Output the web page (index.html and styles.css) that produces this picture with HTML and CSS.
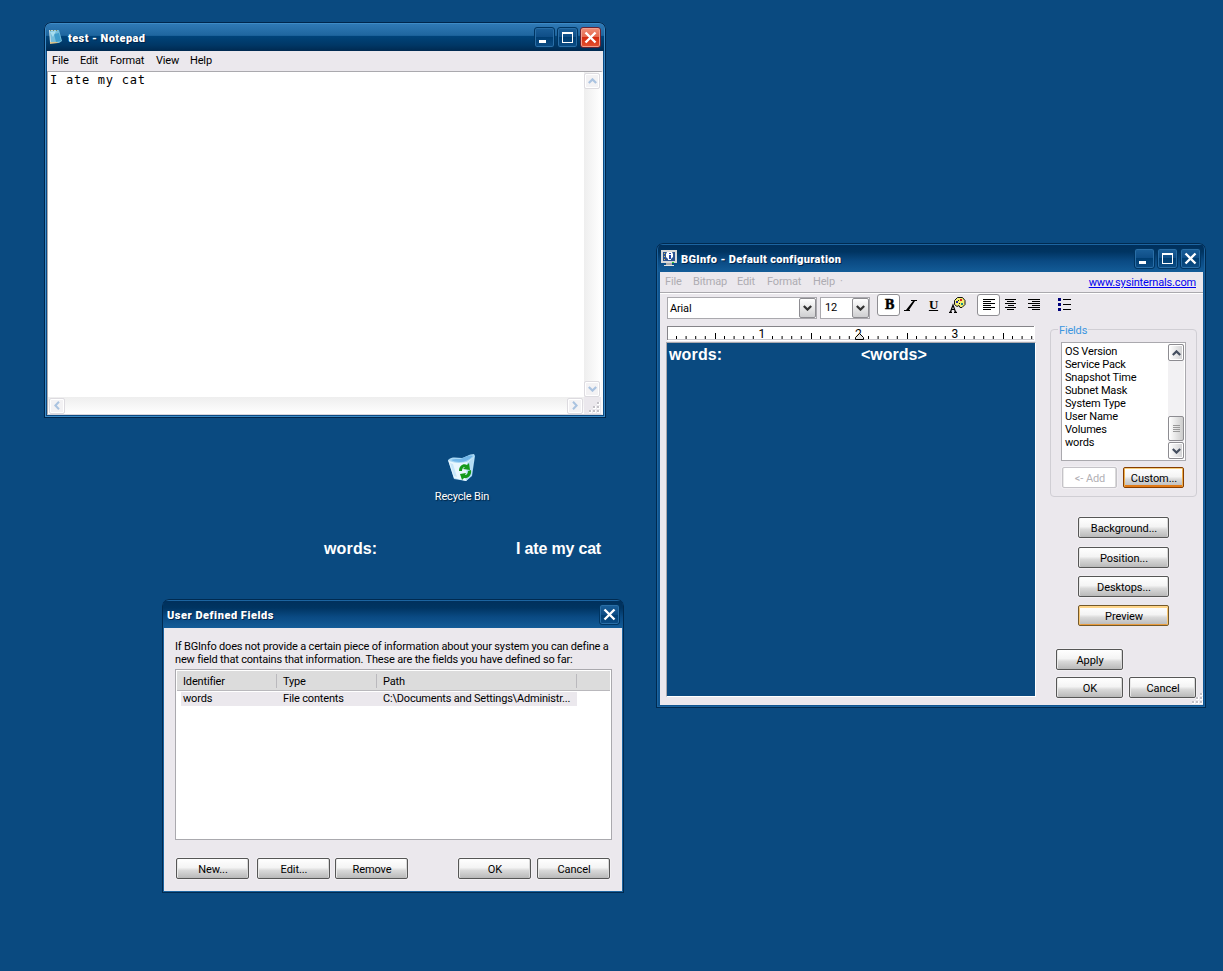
FILE: index.html
```html
<!DOCTYPE html>
<html lang="en">
<head>
<meta charset="utf-8">
<title>Desktop</title>
<link rel="stylesheet" href="styles.css">
</head>
<body>
<svg class="defs" width="0" height="0">
  <symbol id="min" viewBox="0 0 21 21"><path fill="#fff" d="M5 13h7v3H5z"/></symbol>
  <symbol id="max" viewBox="0 0 21 21"><path fill="#fff" fill-rule="evenodd" d="M5 5h11v11H5zM6 7v8h9V7z"/></symbol>
  <symbol id="close" viewBox="0 0 21 21"><path stroke="#fff" stroke-width="2.4" d="M5.5 5.5l10 10M15.5 5.5l-10 10"/></symbol>
  <symbol id="up" viewBox="0 0 9 6"><path fill="none" stroke="currentColor" stroke-width="2.2" d="M.8 5l3.7-3.6L8.2 5"/></symbol>
  <symbol id="down" viewBox="0 0 9 6"><path fill="none" stroke="currentColor" stroke-width="2.2" d="M.8 1l3.7 3.6L8.2 1"/></symbol>
  <symbol id="left" viewBox="0 0 6 9"><path fill="none" stroke="currentColor" stroke-width="2" d="M5 .8L1.4 4.5 5 8.2"/></symbol>
  <symbol id="right" viewBox="0 0 6 9"><path fill="none" stroke="currentColor" stroke-width="2" d="M1 .8l3.6 3.7L1 8.2"/></symbol>
  <symbol id="grip" viewBox="0 0 12 12"><path fill="#fff" d="M9 1h3v3H9zM5 5h3v3H5zM9 5h3v3H9zM1 9h3v3H1zM5 9h3v3H5zM9 9h3v3H9z"/><path fill="#c3c1c7" d="M9 1h2v2H9zM5 5h2v2H5zM9 5h2v2H9zM1 9h2v2H1zM5 9h2v2H5zM9 9h2v2H9z"/></symbol>
</svg>

<main class="desktop">
  <section class="win notepad active">
    <header class="titlebar">
      <svg class="app-icon" width="14" height="16" viewBox="0 0 14 16"><path fill="#c9dde4" d="M0 1h9l1 13H1z"/><path fill="#75bddb" d="M1 2l9-1 3 11-3 2-8-1z"/><path fill="#3f9ccb" d="M5 5l5-1 2 8-5 1z"/><path fill="#a7deef" d="M1 3l6-1-3 6z"/><path fill="#7b8e65" d="M1 1h1v1H1zM4 1h1v1H4zM7 1h1v1H7z"/><path fill="#d8c18a" d="M1 13h7l1 1-8 1z"/></svg>
      <h1 class="title t-note">test - Notepad</h1>
      <div class="controls">
        <span class="ctl"><svg><use href="#min"/></svg></span>
        <span class="ctl"><svg><use href="#max"/></svg></span>
        <span class="ctl red"><svg><use href="#close"/></svg></span>
      </div>
    </header>
    <div class="client note-client">
      <nav class="menu"><span>File</span><span>Edit</span><span>Format</span><span>View</span><span>Help</span></nav>
      <div class="note-body">
        <div class="note-text">I ate my cat</div>
        <div class="track vert"><span class="sbtn off"><svg width="9" height="6"><use href="#up"/></svg></span><span class="sbtn off"><svg width="9" height="6"><use href="#down"/></svg></span></div>
        <div class="track horz"><span class="sbtn off"><svg width="6" height="9"><use href="#left"/></svg></span><span class="sbtn off"><svg width="6" height="9"><use href="#right"/></svg></span></div>
        <div class="corner"><svg width="12" height="12"><use href="#grip"/></svg></div>
      </div>
    </div>
  </section>

  <figure class="bin">
    <svg width="32" height="32" viewBox="0 0 32 32">
      <path fill="#a9d8f5" d="M2 8c4-4 9-2 14-2 4-1 7-4 12-4l1 2-3 20-6 5-12-2z"/>
      <path fill="#e9f7fe" d="M2 8c6 4 14 3 19 2l7-5-3 18-5 6-12-3z"/>
      <path fill="#72b6e8" d="M5 8c4-2 8 0 12-2 4-2 6-3 10-2-4 4-8 6-13 6-4 0-7-1-9-2z"/>
      <path fill="#b4dcf5" d="M21 11l7-6-3 19-5 5z"/>
      <path fill="#c8e7fa" d="M4 11l3 1 4 13-3-1z"/>
      <path fill="#159a1b" d="M13 19c0-6 5-8 8-6l2-2 1 7-7-1 2-2c-2 0-3 2-3 4zM25 18c1 5-3 9-7 8l-2 2-2-6 6-1-1 2c2 0 3-2 3-4z"/>
    </svg>
    <figcaption>Recycle Bin</figcaption>
  </figure>

  <div class="wall"><span>words:</span><span>I ate my cat</span></div>

  <section class="win bginfo">
    <header class="titlebar">
      <svg class="app-icon" width="16" height="17" viewBox="0 0 16 17"><path fill="#d8d8d8" d="M0 0h16v13H0z"/><path fill="#2b5290" d="M2 2h12v9H2z"/><path fill="#fff" d="M6 2h5l1 2v3l-2 2v1H7V9L5 7V4z"/><path fill="#2345a8" d="M8 3h2v1H8zM8 5h2v4H8z"/><path fill="#d8c050" d="M3 3h1v1H3zM3 6h1v1H3zM3 9h1v1H3z"/><path fill="#35d62c" d="M11 12h2v1h-2z"/><path fill="#aaa" d="M5 13h6v2H5z"/><path fill="#e4e4e4" d="M3 15h10v1H3z"/></svg>
      <h1 class="title t-bg">BGInfo - Default configuration</h1>
      <div class="controls">
        <span class="ctl"><svg><use href="#min"/></svg></span>
        <span class="ctl"><svg><use href="#max"/></svg></span>
        <span class="ctl"><svg><use href="#close"/></svg></span>
      </div>
    </header>
    <div class="client bg-client">
      <nav class="menu dim"><span>File</span><span>Bitmap</span><span>Edit</span><span>Format</span><span>Help&nbsp; ·</span><a class="site">www.sysinternals.com</a></nav>
      <div class="bg-main">
        <div class="editor-col">
          <div class="toolbar">
            <div class="combo font"><span>Arial</span><span class="drop"><svg width="9" height="6"><use href="#down"/></svg></span></div>
            <div class="combo size"><span>12</span><span class="drop"><svg width="9" height="6"><use href="#down"/></svg></span></div>
            <div class="tools">
              <span class="tool on bold">B</span>
              <span class="tool ital"><svg width="13" height="11" viewBox="0 0 13 11"><path d="M7 0h6v1h-2l-6 9h1v1H0v-1h2l7-9H7z"/></svg></span>
              <span class="tool under">U</span>
              <span class="tool"><svg width="17" height="16" viewBox="0 0 17 16"><path fill="#f2ee72" stroke="#111" d="M5.500 3.500l3-3h5l2.500 3v4l-3 3h-2l-1-2-2 1-2.500-2z"/><path fill="#d22" d="M11 2h2v2h-2z"/><path fill="#22a" d="M7 4h2v2H7z"/><path fill="#1a8a8a" d="M12 6h2v2h-2z"/><path fill="#111" d="M9 3h1v1H9zM10 6h1v1h-1z"/><path fill="none" stroke="#000" stroke-width="1.200" d="M1.500 15l2.500-7 2.500 7M2.500 12.500h3M0 15.400h3M5 15.400h3"/></svg></span>
              <span class="tool on al"><svg width="12" height="12" viewBox="0 0 12 12"><path d="M0 0h12v1H0zM0 2h8v1H0zM0 4h12v1H0zM0 6h8v1H0zM0 8h12v1H0zM0 10h8v1H0z"/></svg></span>
              <span class="tool lift"><svg width="12" height="12" viewBox="0 0 12 12"><path d="M0 0h11v1H0zM2 2h7v1H2zM0 4h11v1H0zM3 6h6v1H3zM0 8h11v1H0zM2 10h7v1H2z"/></svg></span>
              <span class="tool lift"><svg width="12" height="12" viewBox="0 0 12 12"><path d="M0 0h12v1H0zM4 2h8v1H4zM0 4h12v1H0zM4 6h8v1H4zM0 8h12v1H0zM4 10h8v1H4z"/></svg></span>
            </div>
          </div>
          <svg class="ruler" width="368" height="15" viewBox="0 0 368 15">
            <path fill="#fff" d="M0 0h368v15H0z"/><path fill="#858489" d="M0 0h367v1H1v13H0z"/><path fill="#c9c7cc" d="M1 13h366v1H1z"/>
            <path stroke="#000" stroke-width="3" stroke-dasharray="1 8.600" d="M9 11.500h38M57 11.500h33M105 11.500h38M153 11.500h33M201 11.500h38M249 11.500h33M297 11.500h38M345 11.500h23"/>
            <path d="M48 7h1v6h-1zM144 7h1v6h-1zM240 7h1v6h-1zM336 7h1v6h-1z"/>
            <text x="91.500" y="12">1</text><text x="188" y="12">2</text><text x="284.500" y="12">3</text>
            <path fill="#e4e4e4" stroke="#000" d="M188.500 13.500v-2l4-4 4 4v2z"/>
          </svg>
          <div class="rich"><span>words:</span><span>&lt;words&gt;</span></div>
        </div>
        <aside class="side">
          <svg class="bullets" width="13" height="13" viewBox="0 0 13 13"><path fill="#00007b" d="M0 0h3v3H0zM0 5h3v3H0zM0 10h3v3H0z"/><path d="M5 1h8v1H5zM5 6h8v1H5zM5 11h8v1H5z"/></svg>
          <fieldset class="group">
            <legend>Fields</legend>
            <div class="listbox">
              <ul><li>OS Version</li><li>Service Pack</li><li>Snapshot Time</li><li>Subnet Mask</li><li>System Type</li><li>User Name</li><li>Volumes</li><li>words</li></ul>
              <div class="track lv"><span class="sbtn"><svg width="9" height="6"><use href="#up"/></svg></span><span class="thumb"></span><span class="sbtn"><svg width="9" height="6"><use href="#down"/></svg></span></div>
            </div>
            <div class="pair"><button class="btn w55" disabled>&lt;- Add</button><button class="btn w61 hot">Custom...</button></div>
          </fieldset>
          <div class="stack"><button class="btn">Background...</button><button class="btn gap9">Position...</button><button class="btn">Desktops...</button><button class="btn warm">Preview</button></div>
          <div class="final"><button class="btn">Apply</button><i></i><button class="btn">OK</button><button class="btn">Cancel</button></div>
          <svg class="win-grip" width="12" height="12"><use href="#grip"/></svg>
        </aside>
      </div>
    </div>
  </section>

  <section class="win fields">
    <header class="titlebar">
      <h1 class="title t-udf">User Defined Fields</h1>
      <div class="controls"><span class="ctl"><svg><use href="#close"/></svg></span></div>
    </header>
    <div class="client udf-client">
      <p class="info">If BGInfo does not provide a certain piece of information about your system you can define a<br>new field that contains that information. These are the fields you have defined so far:</p>
      <div class="table">
        <div class="thead"><span>Identifier</span><span>Type</span><span>Path</span></div>
        <div class="trow"><span>words</span><span>File contents</span><span>C:\Documents and Settings\Administr...</span></div>
      </div>
      <footer class="actions"><button class="btn">New...</button><button class="btn">Edit...</button><button class="btn">Remove</button><button class="btn">OK</button><button class="btn">Cancel</button></footer>
    </div>
  </section>
</main>
</body>
</html>
```
FILE: styles.css
```css
* { box-sizing: border-box; }
body { margin: 0; background: #0a4a80; font: 11px/13px Roboto, sans-serif; letter-spacing: -.16px; color: #000; }
svg { display: block; flex: none; }
.defs { position: absolute; }
.desktop { position: relative; width: 1223px; height: 971px; overflow: hidden; }

/* Window frame */
.win { position: absolute; display: flex; flex-direction: column; padding: 0 3px 3px;
  border-radius: 7px 7px 0 0; background: #105590;
  box-shadow: inset 0 0 0 1px #002a50, inset 0 0 0 2px #1c64a0; }
.win.active { box-shadow: inset 0 0 0 1px #00264c, inset 0 0 0 2px #3d8bc6; background: #0b4a83; }
.titlebar { display: flex; flex: none; height: 29px; margin: 0 -1px; padding: 2px 3px 0;
  border-radius: 6px 6px 0 0; background: linear-gradient(#0000 2px, #00305c 2px, #003461 30%, #0a4a83 62%, #135c98); }
.active .titlebar { background: linear-gradient(#0000 2px, #2f79b5 2px, #1e669f 46%, #004379 50%, #003765 80%, #002950); }
.title { margin: 7px 0 0 4px; font-size: 11px; line-height: 15px; font-weight: 900; color: #fff; white-space: nowrap; text-shadow: 1px 1px #00234a; }
.t-note { margin-left: 5px; letter-spacing: .42px; }
.t-bg { letter-spacing: .34px; }
.t-udf { letter-spacing: .52px; }
.app-icon { margin-top: 5px; }
.controls { display: flex; gap: 2px; margin: 3px 0 0 auto; }
.ctl { width: 21px; height: 21px; border: 1px solid #003562; border-radius: 3px; box-shadow: inset 0 0 0 1px #2a6ea6; background: linear-gradient(#1b5f99, #0d4c85 50%, #003e72 50%, #0c4d86); }
.ctl svg { width: 21px; height: 21px; margin: -1px; }
.ctl.red { border-color: #6a2230; box-shadow: inset 0 0 0 1px #f1a08e; background: linear-gradient(#ef8f78, #e5654a 50%, #d52c10 50%, #e65331); }
.client { flex: 1; display: flex; flex-direction: column; min-height: 0; background: #ebe8ed; }
.menu { display: flex; flex: none; }

/* Scroll parts */
.track { display: flex; justify-content: space-between; }
.sbtn { display: flex; align-items: center; justify-content: center; width: 16px; height: 17px; flex: none; border: 1px solid #8d8c91; border-radius: 2px; box-shadow: inset 0 0 0 1px #fff; background: linear-gradient(90deg, #fff, #d0d0d2); color: #454f60; }
.sbtn.off { width: 16px; height: 16px; border-color: #dddbe0; background: #f3f2f4; color: #aac3e0; }

/* Notepad */
.notepad { left: 44px; top: 22px; width: 562px; height: 396px; }
.notepad .menu { height: 20px; padding: 3px 0 0 5px; }
.menu span { white-space: nowrap; }
.notepad .menu span:nth-child(1) { width: 28px; }
.notepad .menu span:nth-child(2) { width: 30px; }
.notepad .menu span:nth-child(3) { width: 46px; }
.notepad .menu span:nth-child(4) { width: 34px; }
.note-body { flex: 1; display: grid; grid-template: 1fr 17px / 1fr 17px; border: 1px solid #aaa9ae; border-right: 2px solid #fafafa; border-bottom: 1px solid #d8d5db; background: #fff; }
.note-text { padding: 1px 2px; font: 12px/14px "DejaVu Sans Mono", monospace; letter-spacing: .75px; }
.vert { flex-direction: column; padding: 1px 0 0; background: linear-gradient(90deg, #eee, #fff); }
.horz { padding: 0 1px; align-items: center; background: linear-gradient(#eee, #fff); }
.corner { padding: 4px 0 0 4px; background: #ebe8ed; }

/* Desktop items */
.bin { position: absolute; left: 422px; top: 452px; width: 80px; margin: 0; display: flex; flex-direction: column; align-items: center; gap: 6px; color: #fff; white-space: nowrap; text-shadow: 1px 1px 1px #00203c; }
.wall { position: absolute; left: 324px; top: 539px; display: flex; font: bold 16px/19px "Liberation Sans", sans-serif; letter-spacing: -.18px; color: #fff; }
.wall span:first-child { width: 192px; letter-spacing: .15px; }

/* BGInfo */
.bginfo { left: 656px; top: 243px; width: 550px; height: 465px; }
.bginfo .client { margin-left: 1px; }
.dim { height: 21px; padding: 3px 7px 0 5px; border-bottom: 1px solid #aaa9ae; box-shadow: 0 1px #fff; color: #aeacb2; }
.dim span:nth-child(1) { width: 28px; }
.dim span:nth-child(2) { width: 44px; }
.dim span:nth-child(3) { width: 30px; }
.dim span:nth-child(4) { width: 46px; }
.site { margin: 1px 0 0 auto; color: #0000f0; text-decoration: underline; }
.bg-main { display: flex; flex: 1; }
.editor-col { display: flex; flex-direction: column; width: 390px; padding-left: 6px; }
.toolbar { display: flex; height: 33px; padding: 1px 0 0 1px; }
.combo { display: flex; height: 22px; margin-top: 3px; border: 1px solid #aaa9ae; background: #fff; }
.combo > span:first-child { flex: 1; padding: 4px 2px; }
.combo.font { width: 150px; }
.combo.size { width: 50px; margin-left: 3px; }
.combo.size > span:first-child { padding: 3px 4px; }
.drop { display: flex; align-items: center; justify-content: center; width: 17px; border: 1px solid #8d8c91; border-radius: 2px; background: linear-gradient(#fff, #cfcfd1); color: #333; }
.tools { display: flex; margin-left: 7px; }
.tool { display: flex; align-items: center; justify-content: center; width: 23px; height: 22px; font: bold 13px/20px "Liberation Serif", serif; }
.tool.on { border: 1px solid #8f8e93; border-radius: 3px; background: #fff; }
.tool.bold { font-weight: 900; font-size: 14px; padding-left: 2px; -webkit-text-stroke: .5px #000; }
.tool.ital { padding-right: 3px; }
.tool.under { padding-right: 2px; text-decoration: underline; }
.tool.al { margin-left: 8px; }
.tool.lift { padding-right: 2px; }
.ruler { margin-left: 1px; font: 12px Roboto, sans-serif; }
.rich { display: flex; width: 370px; height: 355px; margin-top: 1px; padding: 2px 2px; border: 1px solid #aaa9ae; border-right-color: #fff; border-bottom-color: #fff; background: #0a4a80; color: #fff; font: bold 16px/19px "Liberation Sans", sans-serif; letter-spacing: 0; }
.rich span:first-child { width: 192px; letter-spacing: .15px; }
.side { position: relative; width: 153px; padding-top: 5px; }
.bullets { margin-left: 8px; }
.group { width: 147px; height: 174px; margin: 12px 0 0; padding: 6px 10px 0; border: 1px solid #d0ced4; border-radius: 4px; min-width: 0; }
.group legend { height: 13px; margin-left: -3px; padding: 0 1px; line-height: 15px; color: #3b96e0; }
.listbox { display: flex; justify-content: space-between; width: 125px; height: 119px; padding: 1px; border: 1px solid #aaa9ae; background: #fff; }
.listbox ul { margin: 1px 0 0; padding: 0 0 0 2px; list-style: none; }
.lv { flex-direction: column; width: 16px; background: #f2f1f3; }
.lv .thumb { height: 25px; margin: auto 0 1px; border: 1px solid #8d8c91; border-radius: 2px; background: linear-gradient(#999 0 0) center 8px/7px 1px no-repeat, linear-gradient(#999 0 0) center 10px/7px 1px no-repeat, linear-gradient(#999 0 0) center 12px/7px 1px no-repeat, linear-gradient(#999 0 0) center 14px/7px 1px no-repeat, linear-gradient(90deg, #fff, #ccc); }
.pair { display: flex; gap: 6px; padding: 6px 0 0 1px; }

/* Push buttons */
.btn { display: block; flex: none; height: 21px; padding: 1px 0 0; border: 1px solid #565656; border-radius: 2px; background: linear-gradient(#fff, #f4f4f4 45%, #d9d9d9 60%, #b9b9b9); box-shadow: inset 1px 0 #e9e9e9, inset -1px 0 #d9d9d9, 0 0 0 1px #f1eff2; font: 11px/19px Roboto, sans-serif; letter-spacing: -.07px; color: #000; }
.btn { padding: 2px 0 0 1px; line-height: 17px; }
.btn:disabled { border-color: #c5c3c8; background: #fff; color: #b2b0b5; }
.w55 { width: 55px; }
.w61 { width: 61px; }
.hot { border-color: #863d00; box-shadow: inset 0 1px #f6ce7d, inset 1px 0 #edae4d, inset -1px 0 #edae4d, inset 0 -2px #e27a16; }
.warm { border-color: #74592b; box-shadow: inset 0 2px #ffd68a, inset 1px 0 #f7c775, inset -1px 0 #f7c775, inset 0 -1px #e99b3d; }
.stack { display: flex; flex-direction: column; gap: 8px; width: 91px; margin: 20px 0 0 28px; }
.gap9 { margin-top: 1px; }
.final { display: grid; grid-template-columns: 67px 67px; gap: 7px 6px; margin: 23px 0 0 6px; }
.win-grip { position: absolute; right: 0; bottom: 1px; }

/* User Defined Fields */
.fields { left: 162px; top: 599px; width: 462px; height: 294px; padding: 0 2px 2px; }
.fields .titlebar { padding: 2px 3px 0 4px; }
.fields .title { margin-left: 0; }
.udf-client { padding: 12px 11px; }
.info { margin: 0 0 3px; white-space: nowrap; letter-spacing: -.175px; }
.table { width: 437px; height: 171px; padding: 1px; border: 1px solid #aaa9ae; background: #fff; }
.thead, .trow { display: grid; grid-template-columns: 100px 100px 200px 1fr; }
.thead { height: 20px; border-bottom: 1px solid #b9b8bc; background: #dcdcdc; }
.thead span { height: 14px; margin: 3px 0; padding-left: 6px; line-height: 15px; border-right: 1px solid #bab9bd; }
.trow { width: 396px; height: 14px; margin: 1px 0 0 4px; background: #ebe8ed; grid-template-columns: 100px 100px 196px; white-space: nowrap; }
.trow span { padding-left: 2px; }
.trow span:last-child { letter-spacing: -.19px; }
.actions { display: flex; padding: 18px 0 0 1px; }
.actions .btn { width: 73px; }
.actions .btn:nth-child(2) { margin-left: 8px; }
.actions .btn:nth-child(3) { margin-left: 5px; }
.actions .btn:nth-child(4) { margin-left: 50px; }
.actions .btn:nth-child(5) { margin-left: 6px; }
```
